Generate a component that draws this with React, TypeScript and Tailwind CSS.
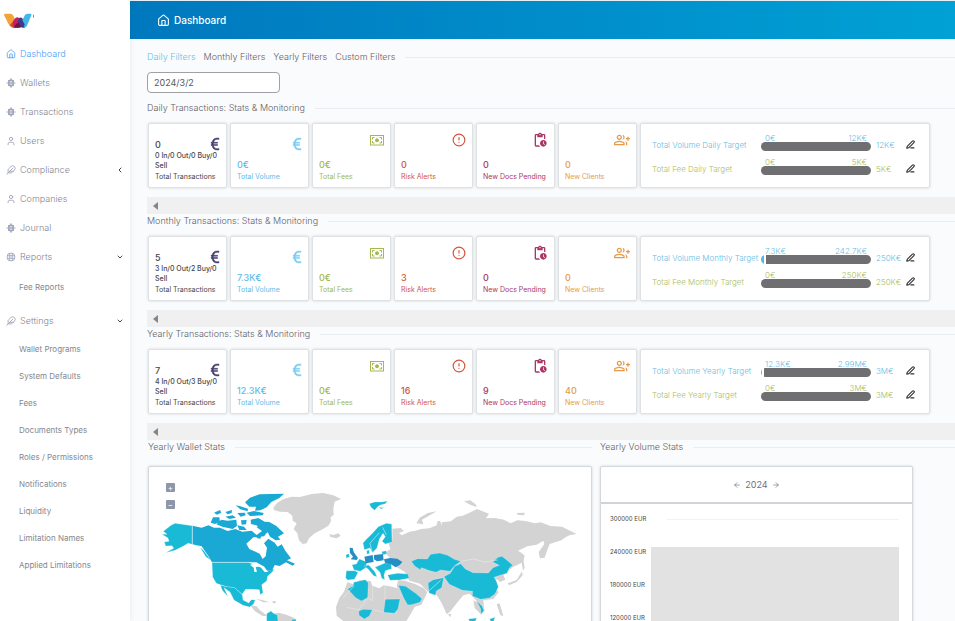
import type { ReactNode } from 'react'
import { ArrowLeft, ArrowRight, ChevronDown, ChevronLeft, CircleAlert, Feather, House, PenLine, User } from 'lucide-react'
import { BsCurrencyEuro } from 'react-icons/bs'
import { MdOutlineGroupAdd, MdOutlinePendingActions } from 'react-icons/md'

interface Target {
  label: string
  done: string
  left: string
  total: string
  percent: number
}

interface Period {
  name: string
  count: string
  breakdown: string
  volume: string
  alerts: string
  docs: string
  clients: string
  targets: Target[]
}

const periods: Period[] = [
  {
    name: 'Daily',
    count: '0',
    breakdown: '0 In/0 Out/0 Buy/0 Sell',
    volume: '0€',
    alerts: '0',
    docs: '0',
    clients: '0',
    targets: [
      { label: 'Total Volume Daily Target', done: '0€', left: '12K€', total: '12K€', percent: 0 },
      { label: 'Total Fee Daily Target', done: '0€', left: '5K€', total: '5K€', percent: 0 },
    ],
  },
  {
    name: 'Monthly',
    count: '5',
    breakdown: '3 In/0 Out/2 Buy/0 Sell',
    volume: '7.3K€',
    alerts: '3',
    docs: '0',
    clients: '0',
    targets: [
      { label: 'Total Volume Monthly Target', done: '7.3K€', left: '242.7K€', total: '250K€', percent: 3 },
      { label: 'Total Fee Monthly Target', done: '0€', left: '250K€', total: '250K€', percent: 0 },
    ],
  },
  {
    name: 'Yearly',
    count: '7',
    breakdown: '4 In/0 Out/3 Buy/0 Sell',
    volume: '12.3K€',
    alerts: '16',
    docs: '9',
    clients: '40',
    targets: [
      { label: 'Total Volume Yearly Target', done: '12.3K€', left: '2.99M€', total: '3M€', percent: 1 },
      { label: 'Total Fee Yearly Target', done: '0€', left: '3M€', total: '3M€', percent: 0 },
    ],
  },
]

const settings = [
  'Wallet Programs',
  'System Defaults',
  'Fees',
  'Documents Types',
  'Roles / Permissions',
  'Notifications',
  'Liquidity',
  'Limitation Names',
  'Applied Limitations',
]

const Logo = () => (
  <svg viewBox="0 0 90 48" className="h-4 w-[30px]" aria-label="Home">
    <path d="M0 6Q0 2 5 2H19Q25 2 28 8L36 24L25 43Q17 40 13 32Z" fill="#f2a33a" />
    <path d="M34 17L45 28L35 44Q30 46 23 43L17 37Z" fill="#e2482d" />
    <path d="M27 26Q36 9 44 14L57 38Q54 44 45 44H34Q24 40 27 26Z" fill="#c4205f" />
    <path d="M37 33L45 26L54 40Q50 45 37 44L29 43Z" fill="#6b1646" />
    <path d="M44 16Q52 9 58 20L66 36L62 44H55Q50 42 47 35L42 25Z" fill="#433a8c" />
    <path d="M55 22L63 6Q66 2 72 2H79Q84 2 82 7L69 38Q67 44 59 44L62 34Z" fill="#42b7ea" />
    <path d="M87 5H89V14H87Z" fill="#555" />
  </svg>
)

const GlobeIcon = () => (
  <svg viewBox="0 0 24 24" className="size-[10px]" fill="none" stroke="currentColor" strokeWidth="2">
    <ellipse cx="12" cy="12" rx="4" ry="10" />
    <path d="M1 12H23M5 6H19M5 18H19M6 5V19M18 5V19M12 1V23" />
  </svg>
)

const ReportIcon = () => (
  <svg viewBox="0 0 24 24" className="size-[10px]" fill="none" stroke="currentColor" strokeWidth="2">
    <rect x="3" y="3" width="18" height="18" rx="7" />
    <path d="M3 9H21M3 15H21M9 3V21M15 3V21" />
  </svg>
)

const CashIcon = () => (
  <svg viewBox="0 0 28 22" className="h-[11px] w-[14px]" fill="none" stroke="currentColor" strokeWidth="2">
    <rect x="1" y="1" width="26" height="19" />
    <circle cx="14" cy="10.5" r="3" fill="currentColor" />
    <path d="M5 9V5H9M19 5H23V9M23 12V16H19M9 16H5V12" />
  </svg>
)

interface NavItemProps {
  icon: ReactNode
  label: string
  active?: boolean
  end?: ReactNode
}

const NavItem = ({ icon, label, active, end }: NavItemProps) => (
  <a
    href="#"
    className={`flex h-[29px] items-center gap-1 pr-1.5 pl-1.5 ${active ? 'text-[#4d9df8]' : 'text-[#84878f]'}`}
  >
    <span className={active ? 'text-[#4d9df8]' : 'text-[#9aa0b4]'}>{icon}</span>
    <span className="flex-1">{label}</span>
    <span className="text-[#444]">{end}</span>
  </a>
)

const SubItem = ({ label }: { label: string }) => (
  <a href="#" className="flex h-[27px] items-center pl-[19px] text-[8px] font-normal text-[#84878f]">
    {label}
  </a>
)

const Sidebar = () => (
  <aside className="relative z-10 w-[130px] shrink-0 bg-white pt-[13px] text-[9px] font-light shadow-[0_0_6px_rgba(0,0,0,0.08)]">
    <a href="#" className="ml-1 block">
      <Logo />
    </a>
    <nav className="pt-[10px]">
      <NavItem active icon={<House size={10} />} label="Dashboard" />
      <NavItem icon={<GlobeIcon />} label="Wallets" />
      <NavItem icon={<GlobeIcon />} label="Transactions" />
      <NavItem icon={<User size={10} />} label="Users" />
      <NavItem icon={<Feather size={10} />} label="Compliance" end={<ChevronLeft size={8} strokeWidth={3} />} />
      <NavItem icon={<User size={10} />} label="Companies" />
      <NavItem icon={<GlobeIcon />} label="Journal" />
      <NavItem icon={<ReportIcon />} label="Reports" end={<ChevronDown size={8} strokeWidth={3} />} />
      <div className="pt-0.5 pb-1.5">
        <SubItem label="Fee Reports" />
      </div>
      <NavItem icon={<Feather size={10} />} label="Settings" end={<ChevronDown size={8} strokeWidth={3} />} />
      {settings.map((label) => (
        <SubItem key={label} label={label} />
      ))}
    </nav>
  </aside>
)

const Divider = ({ children }: { children: ReactNode }) => (
  <div className="flex h-[14px] items-center gap-2.5 text-[9px] font-light whitespace-nowrap text-[#5f6268]">
    {children}
    <span className="h-px flex-1 bg-[#e9edef]" />
  </div>
)

interface StatCardProps {
  color: string
  icon: ReactNode
  value: string
  label: string
  detail?: string
}

const StatCard = ({ color, icon, value, label, detail }: StatCardProps) => (
  <div
    className={`relative flex h-[65px] w-[79px] shrink-0 flex-col justify-end rounded-xs border border-[#dfe2e4] bg-white px-1.5 pb-1 shadow-[0_0_3px_rgba(0,0,0,0.16)] ${color}`}
  >
    <span className="absolute top-1 right-1.5 flex h-6 items-center">{icon}</span>
    <span className="text-[9px] leading-[12px] font-medium">{value}</span>
    {detail && <span className="text-[7px] leading-[10px] font-medium">{detail}</span>}
    <span className="text-[7px] leading-[12px] whitespace-nowrap">{label}</span>
  </div>
)

const EuroIcon = ({ className }: { className: string }) => (
  <BsCurrencyEuro size={16} strokeWidth={0.5} className={`mt-2 -mr-[3px] ${className}`} />
)

const TargetRow = ({ target, color }: { target: Target; color: string }) => (
  <div className={`flex h-6 items-center text-[8px] font-light whitespace-nowrap ${color}`}>
    <span className="w-[109px] pt-1.5">{target.label}</span>
    <div className="w-[110px]">
      <div className="flex h-2 items-center justify-between px-1">
        <span>{target.done}</span>
        <span>{target.left}</span>
      </div>
      <div className="flex h-[9px] gap-0.5 overflow-hidden rounded-full">
        {target.percent > 0 && <div className="bg-[#50bce6]" style={{ width: `${target.percent}%` }} />}
        <div className="flex-1 bg-[#6f6f72]" />
      </div>
    </div>
    <span className="w-[35px] pt-1.5 pl-[5px]">{target.total}</span>
    <button type="button" aria-label={`Edit ${target.label}`} className="pt-1 text-[#333]">
      <PenLine size={9} strokeWidth={3} />
    </button>
  </div>
)

const PeriodSection = ({ period }: { period: Period }) => (
  <section>
    <Divider>
      <h2>{period.name} Transactions: Stats &amp; Monitoring</h2>
    </Divider>
    <div className="mt-2 ml-px flex gap-[3px]">
      <StatCard
        color="text-[#45474d]"
        icon={<EuroIcon className="text-[#453c6c]" />}
        value={period.count}
        detail={period.breakdown}
        label="Total Transactions"
      />
      <StatCard
        color="text-[#5ebde8]"
        icon={<EuroIcon className="text-[#7bccf2]" />}
        value={period.volume}
        label="Total Volume"
      />
      <StatCard color="text-[#a3b84e]" icon={<CashIcon />} value="0€" label="Total Fees" />
      <StatCard color="text-[#d3543d]" icon={<CircleAlert size={14} />} value={period.alerts} label="Risk Alerts" />
      <StatCard
        color="text-[#ab3665]"
        icon={<MdOutlinePendingActions size={16} />}
        value={period.docs}
        label="New Docs Pending"
      />
      <StatCard
        color="text-[#e69a4b]"
        icon={<MdOutlineGroupAdd size={16} />}
        value={period.clients}
        label="New Clients"
      />
      <div className="flex h-[65px] w-[290px] shrink-0 flex-col rounded-xs border border-[#dfe2e4] bg-white pt-1.5 pl-[11px] shadow-[0_0_3px_rgba(0,0,0,0.16)]">
        <TargetRow target={period.targets[0]} color="text-[#67bde4]" />
        <TargetRow target={period.targets[1]} color="text-[#a9bd5c]" />
      </div>
    </div>
    <div className="mt-[9px] flex h-[17px] items-center bg-[#f0f0f0] pl-1.5">
      <svg viewBox="0 0 5 8" className="h-2 w-[5px]" fill="#858585">
        <path d="M5 0V8L0 4Z" />
      </svg>
    </div>
  </section>
)

const WorldMap = () => (
  <svg viewBox="27 -39 1326 640" className="w-full" role="img" aria-label="Wallets by country">
    <g fill="#d3d3d3">
      <path d="M400 83L412 68L430 57L455 50L480 51L515 42L550 39L580 46L603 57L584 65L580 87L581 105L572 112L573 124L565 137L545 149L524 160L507 175L500 190L488 192L477 181L472 160L461 147L470 130L458 122L457 107L443 96L420 95L402 90Z" />
      <path d="M568 162L580 165L595 160L602 167L590 175L571 171Z" />
      <path d="M330 375L350 379L360 391L375 402L381 408L368 408L345 394ZM347 356L370 361L388 367L370 367ZM398 363H407V370H398Z" />
      <path d="M400 401L417 398L439 404L463 414L470 424H405Z" />
      <path d="M622 307L640 313L660 300L692 303L697 317L718 325L731 316L760 321L775 326L782 346L794 367L805 378L824 381L815 397L799 424H611L590 407L588 381L598 354L612 335Z" />
      <path d="M757 146L782 144L792 153L777 159L785 166L809 155L826 152L844 147L868 145L890 136L893 122L901 124L905 137L905 127L933 124L950 110L968 107L987 99L1011 87L1047 101L1038 115L1065 114L1092 119L1112 130L1132 121L1157 123L1185 130L1202 127L1231 138L1266 140L1290 152L1310 162L1290 165L1278 171L1264 181L1229 192L1220 215L1214 233L1200 235L1196 216L1213 192L1210 182L1190 194L1162 199L1134 212L1146 220L1154 227L1149 247L1120 260L1090 285L1096 299L1080 306L1071 298L1060 300L1065 320L1076 337L1060 357L1030 361L1031 375L1034 395L1016 384L1008 361L989 341L970 346L950 370L930 395L920 403L905 369L890 345L864 335L840 311L808 302L795 276L763 257L751 235L735 218L751 207L746 190L757 176Z" />
      <path d="M829 130L839 113L863 99L890 94L862 110L846 119L850 133ZM972 64L991 61L1007 73L1010 81L992 75ZM1130 99L1154 98L1152 106L1134 105ZM1148 225L1154 263L1149 272L1145 247ZM1146 274L1148 286L1130 306L1107 316L1103 310L1130 300ZM775 300L795 302L825 312L852 325L862 337L844 374L815 384L800 380L780 342L770 317ZM924 403L934 401L931 412ZM1070 373L1079 370L1090 408L1081 406ZM1000 361L1020 373L1025 405L1004 384Z" />
    </g>
    <g fill="#18bad6" stroke="#fff" strokeWidth="0.7">
      <path d="M66 163L81 163L70 154L93 136L105 130L157 137V193L174 198L190 210L212 240L198 231L180 202L157 193L144 190L129 199L105 211L77 218L101 205L96 197L77 198L73 186L87 184L84 174Z" />
      <path d="M216 247H325L346 256L367 264L380 272L403 268L396 277L383 288L380 303L365 314L369 338L361 344L358 329L340 328L317 328L306 343L285 324L260 320L246 316L229 310L218 291Z" />
      <path d="M241 316L260 320L284 323L307 344L309 360L326 369L334 359L346 360L340 373L329 381L309 376L282 360L270 336L252 323L264 350L247 331Z" />
      <path d="M380 401L393 393L400 400L412 405L414 424H380ZM455 419L469 417L467 424H455Z" />
      <path d="M688 71L704 66L726 66L742 63L736 71L721 75L713 80L704 91L693 82ZM716 82L731 83L724 87Z" />
      <path d="M669 189L679 178L696 161L715 140L739 130L755 132L756 186L736 192L726 184L736 170L729 160L718 177L711 204L697 218L690 204L673 209ZM680 212L687 210L689 220L681 223Z" />
      <path d="M618 224L626 221L629 230L619 235ZM636 254L649 252L658 237L681 246L677 263L661 274L642 270ZM619 272H645L654 278L643 298L623 300L617 294Z" />
      <path d="M672 258L686 255L705 276L711 290L701 287L685 268ZM705 262L735 249L753 250L755 266L736 272L732 286L734 299L725 295L720 277Z" />
      <path d="M725 215L738 212L740 222L728 224ZM743 285L773 280L804 282L807 295L777 300L750 301Z" />
      <path d="M623 327L640 317L641 307L676 299L685 309L683 353L664 363L647 353Z" />
      <path d="M656 393L670 388L697 389L688 408L673 417L657 406ZM736 358L780 357L774 387L763 400L731 397Z" />
      <path d="M775 316L797 319L827 340L846 356L840 367L815 374L803 375L791 354Z" />
      <path d="M814 244L833 236L862 237L872 223L899 219L923 226L943 238L962 244L944 257L930 274L902 270L888 277L864 271L859 268L843 263L842 270L824 258Z" />
      <path d="M864 309L880 299L911 293L905 323L889 333L886 346L867 339Z" />
      <path d="M912 290L931 280L944 259L962 251L976 267L999 278L1045 279L1059 263L1078 256L1058 246L1074 232L1086 229L1103 242L1118 256L1108 264L1101 280L1083 285L1062 292L1069 303L1075 321L1065 342L1048 354L1022 358L997 348L998 334L967 331L928 313Z" />
      <path d="M1010 363L1026 378L1032 392L1023 403L1022 386ZM985 417L1010 414L1006 424H989ZM1049 417L1065 412L1061 424H1052Z" />
    </g>
    <g fill="#1aa9d4">
      <path d="M157 137L185 143L205 136L222 143L240 143L263 153L286 147L307 155L335 152L350 165L366 153L350 142L363 132L381 140L383 155L372 169L340 172L319 191L328 207L359 221L368 237L377 229L381 203L372 190L385 176L404 188L413 200L425 193L437 214L453 235L441 241L465 251L458 257L438 247L419 258L404 255L397 270L379 272L373 260L349 247H216L205 228L185 199L157 193Z" />
      <path d="M212 128L219 112L238 112L240 125L225 132ZM229 133L244 119L263 122L289 119L291 138L278 147L247 140ZM222 98L240 90L244 98L231 104ZM256 96L276 90L275 99L263 103ZM287 76L301 79L324 86L323 94L301 88ZM292 99L315 98L317 106L302 110ZM320 98L342 93L371 99L368 106L330 108ZM303 121L320 120L318 133L305 134ZM256 110L278 106L288 113L268 117ZM292 136L312 140L320 150L298 150Z" />
      <path d="M315 67L330 53L359 43L432 41L418 54L394 66L380 82L361 91L345 92L348 80L328 80Z" />
      <path d="M332 119L355 114L374 125L388 126L409 138L432 160L414 170L421 179L407 181L390 170L384 158L366 148L349 136L333 132ZM349 166L365 165L361 176L350 174Z" />
    </g>
    <path
      d="M330 254L348 250L360 259L347 262L351 275L343 276L341 263ZM363 261L375 264L384 276L374 276L366 267Z"
      fill="#fff"
    />
    <g fill="#258fc5">
      <path d="M629 203L638 204L641 216L654 234L650 240L632 238L639 230L630 219Z" />
      <path d="M673 230L698 225L701 246L677 250ZM702 225L729 222L731 241L711 244L702 238ZM732 238L750 234L772 236L787 246L779 255L767 262L753 253L735 248Z" />
    </g>
    <g fill="none" stroke="#fff" strokeWidth="1.5">
      <path d="M157 137V193M216 247H330" />
      <path
        d="M962 244L1000 237L1035 246L1073 240M642 318L609 354M698 318V362L684 354M735 319V359M620 382L660 390M700 389L731 397M684 353L656 390"
        stroke="#efefef"
      />
      <path d="M697 218L690 190L718 158M728 142L739 165M864 335L902 301" />
    </g>
  </svg>
)

const MapCard = () => (
  <section className="w-[444px] shrink-0">
    <Divider>
      <h2>Yearly Wallet Stats</h2>
    </Divider>
    <div className="relative mt-3 h-60 rounded-xs border border-[#d5d9dc] bg-white shadow-[0_0_3px_rgba(0,0,0,0.16)]">
      <WorldMap />
      <div className="absolute top-4 left-[17px] flex flex-col gap-2 text-[8px] leading-none text-white">
        <button type="button" aria-label="Zoom in" className="size-[9px] rounded-[1px] bg-[#8e97a9]">
          +
        </button>
        <button type="button" aria-label="Zoom out" className="size-[9px] rounded-[1px] bg-[#8e97a9]">
          −
        </button>
      </div>
    </div>
  </section>
)

const VolumeCard = () => (
  <section className="flex-1">
    <Divider>
      <h2>Yearly Volume Stats</h2>
    </Divider>
    <div className="mt-3 h-60 w-[313px] rounded-xs border border-[#d5d9dc] bg-white shadow-[0_0_3px_rgba(0,0,0,0.16)]">
      <div className="flex h-[37px] items-center justify-center gap-1 border-b-2 border-[#d0d4d8] text-[9px] text-[#6f7278]">
        <button type="button" aria-label="Previous year">
          <ArrowLeft size={8} />
        </button>
        2024
        <button type="button" aria-label="Next year">
          <ArrowRight size={8} />
        </button>
      </div>
      <div className="flex pt-3">
        <div className="w-[50px] pl-[9px] text-[6px] leading-[6px] text-[#444]">
          {['300000', '240000', '180000', '120000'].map((tick) => (
            <div key={tick} className="h-[33px] whitespace-nowrap">
              {tick} EUR
            </div>
          ))}
        </div>
        <div className="mr-[13px] flex-1 pt-[3px]">
          <div className="ml-4 h-[28px] border-t border-[#f2f2f2]" />
          <div className="h-40 bg-[#e2e2e2]" />
        </div>
      </div>
    </div>
  </section>
)

const App = () => (
  <div className="flex h-screen overflow-hidden bg-[#fafbfd] font-['Inter',sans-serif]">
    <Sidebar />
    <main className="min-w-0 flex-1 overflow-hidden">
      <header className="flex h-[39px] items-center gap-1 border-t border-[#e4eef3] bg-linear-to-r from-[#0078be] to-[#00a1d5] pl-[27px] text-white">
        <House size={13} />
        <h1 className="text-[10px] font-medium">Dashboard</h1>
      </header>
      <div className="pt-[11px] pl-[17px]">
        <Divider>
          <nav className="flex gap-2">
            <a href="#" className="text-[#63c1e8]">
              Daily Filters
            </a>
            <a href="#">Monthly Filters</a>
            <a href="#">Yearly Filters</a>
            <a href="#">Custom Filters</a>
          </nav>
        </Divider>
        <input
          aria-label="Date"
          defaultValue="2024/3/2"
          className="mt-2 mb-2 block h-[21px] w-[133px] rounded border border-[#9fa1a5] bg-white px-1.5 text-[9px] text-[#55585e]"
        />
        {periods.map((period) => (
          <PeriodSection key={period.name} period={period} />
        ))}
        <div className="ml-px flex gap-2">
          <MapCard />
          <VolumeCard />
        </div>
      </div>
    </main>
  </div>
)

export default App
